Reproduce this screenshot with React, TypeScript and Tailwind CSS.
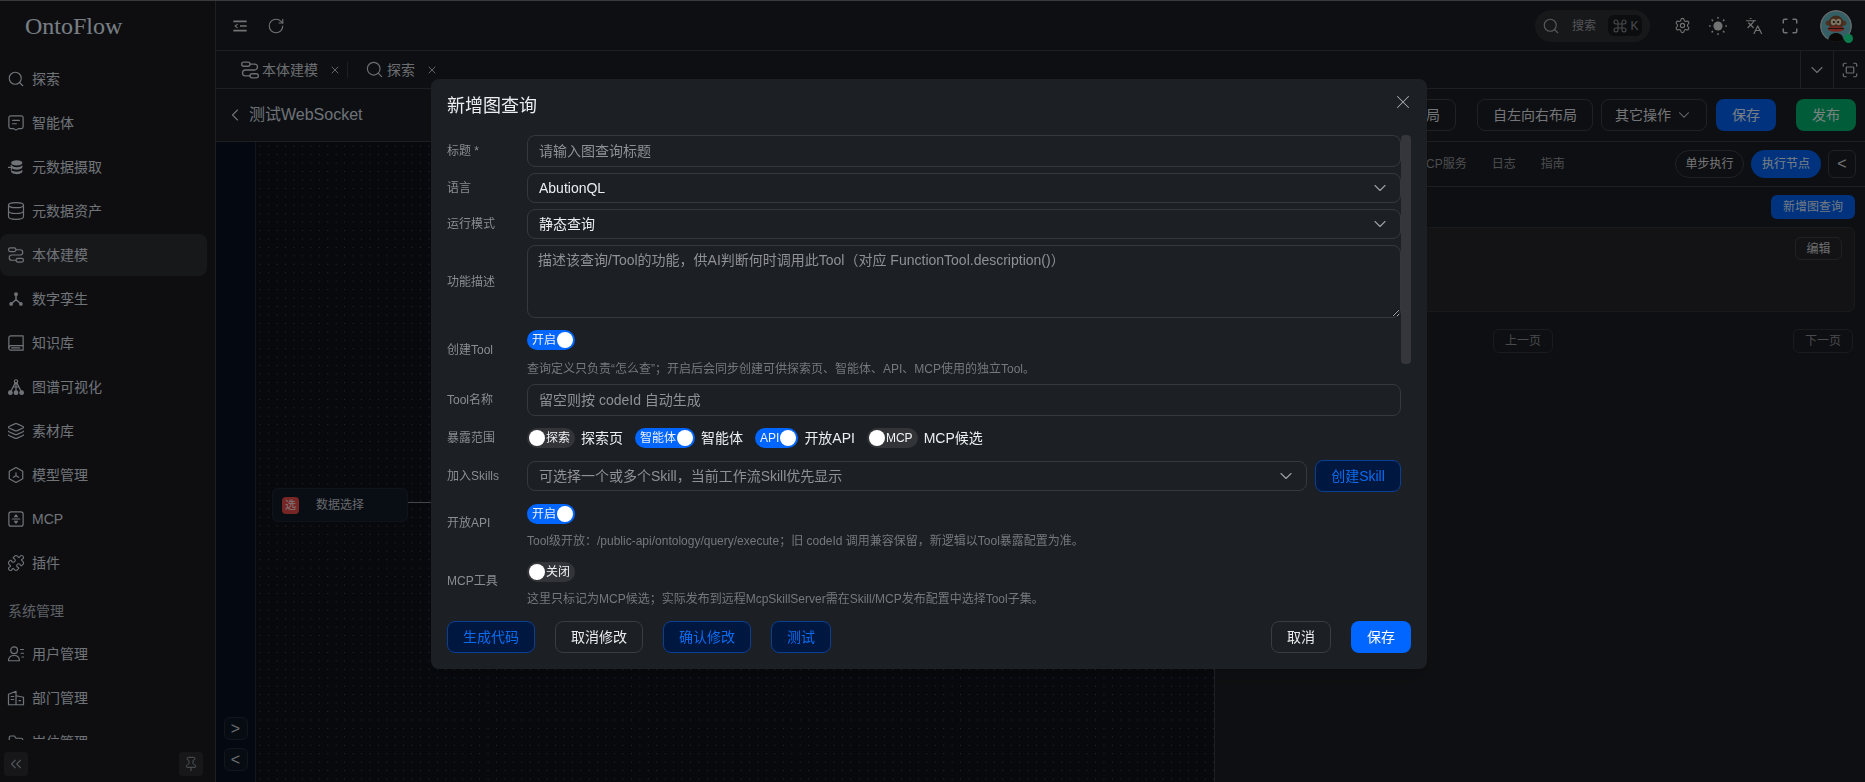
import type { ReactNode } from "react";
import { ChevronDown, ChevronLeft, ChevronsLeft, Database, Languages, Layers, Pin, Puzzle, RotateCw, Search, Settings, X } from "lucide-react";

type IconProps = { className?: string };

const Svg = ({ className = "h-4 w-4", children }: IconProps & { children: ReactNode }) => (
  <svg viewBox="0 0 24 24" fill="none" stroke="currentColor" strokeWidth="1.6" strokeLinecap="round" strokeLinejoin="round" className={className}>
    {children}
  </svg>
);

const AgentIcon = (p: IconProps) => (
  <Svg {...p}>
    <path d="M5 2.500h14a2.500 2.500 0 0 1 2.500 2.500v12a2.500 2.500 0 0 1-2.500 2.500h-4l-3 2-3-2H5A2.500 2.500 0 0 1 2.500 17V5A2.500 2.500 0 0 1 5 2.500z" />
    <path d="M7.500 8.500h9M7.500 13h5" />
  </Svg>
);
const IngestIcon = (p: IconProps) => (
  <Svg {...p}>
    <ellipse cx="13" cy="6.500" rx="7.500" ry="3.500" fill="currentColor" stroke="none" />
    <path d="M8 11.200c1.500.7 3.200 1 5 1 3.200 0 6-.9 7.500-2.600V12c0 1.900-3.400 3.500-7.500 3.500-2 0-3.700-.4-5-1z" fill="currentColor" stroke="none" />
    <path d="M5.500 16c1.700 1.500 4.400 2.200 7.500 2.200 3.200 0 6-.9 7.500-2.600V18c0 1.900-3.400 3.500-7.500 3.500S5.500 19.900 5.500 18z" fill="currentColor" stroke="none" />
    <path d="M2 12.500h6M5.500 10l2.500 2.500L5.500 15" />
  </Svg>
);
const OntologyIcon = (p: IconProps) => (
  <Svg {...p}>
    <rect x="2" y="2.500" width="10" height="5" rx="2.500" />
    <path d="M12 5h5.500a3.500 3.500 0 0 1 0 7h-11a3.500 3.500 0 0 0 0 7H12" />
    <rect x="12" y="16.500" width="10" height="5" rx="2.500" />
  </Svg>
);
const TwinIcon = (p: IconProps) => (
  <Svg {...p}>
    <circle cx="12" cy="5.500" r="2.500" fill="currentColor" stroke="none" />
    <circle cx="5.500" cy="18.500" r="2.500" fill="currentColor" stroke="none" />
    <circle cx="18.500" cy="18.500" r="2.500" fill="currentColor" stroke="none" />
    <path d="M12 7v6l-6 5M12 13l6 5" strokeWidth="2" />
  </Svg>
);
const BookIcon = (p: IconProps) => (
  <Svg {...p}>
    <path d="M2.500 19V5A2.500 2.500 0 0 1 5 2.500h16.500v19H5A2.500 2.500 0 0 1 2.500 19z" />
    <path d="M2.500 18A2.500 2.500 0 0 1 5 15.500h16.500M6 18.500h11" />
  </Svg>
);
const GraphIcon = (p: IconProps) => (
  <Svg {...p}>
    <circle cx="12" cy="4.500" r="2.200" />
    <circle cx="4.500" cy="19.500" r="2.400" fill="currentColor" />
    <circle cx="12" cy="19.500" r="2.400" fill="currentColor" />
    <circle cx="19.500" cy="19.500" r="2.400" fill="currentColor" />
    <path d="M11 6.500 5.500 17M12 6.500V17M13 6.500 18.500 17M8 12h8" />
  </Svg>
);
const ModelIcon = (p: IconProps) => (
  <Svg {...p}>
    <path d="M12 2l9 5v10l-9 5-9-5V7z" />
    <path d="M12 9v4l-3.500 2M12 13l3.500 2" />
  </Svg>
);
const McpIcon = (p: IconProps) => (
  <Svg {...p}>
    <rect x="2.500" y="2.500" width="19" height="19" rx="3" />
    <path d="M7 12h10M12 6.500l-2 2.500h4zM12 17.500l-2-2.500h4z" />
  </Svg>
);
const UserIcon = (p: IconProps) => (
  <Svg {...p}>
    <circle cx="9.500" cy="7" r="4.500" />
    <path d="M2 21c0-4.500 3-7 7.500-7s7 2.500 7 7z" />
    <path d="M18 6h4M19 11h3M20 16h2" />
  </Svg>
);
const DeptIcon = (p: IconProps) => (
  <Svg {...p}>
    <path d="M2 21V7l10-4v18zM12 9l10 2v10H2" />
    <path d="M5.500 10H9M5.500 14H9M16 15.500h2" />
  </Svg>
);
const PostIcon = (p: IconProps) => (
  <Svg {...p}>
    <path d="M3 20V6a2 2 0 0 1 2-2h5l2 3h7a2 2 0 0 1 2 2v11z" />
  </Svg>
);
const FoldIcon = (p: IconProps) => (
  <Svg {...p}>
    <path d="M2 5h20M2 19h20M12 12h10" strokeWidth="2.600" strokeLinecap="butt" />
    <path d="M8 9.500 4.500 12 8 14.500" />
  </Svg>
);
const SunDotsIcon = (p: IconProps) => (
  <Svg {...p}>
    <circle cx="12" cy="12" r="5.500" fill="currentColor" stroke="none" />
    <path d="M12 2v.5M12 21.500v.5M2 12h.5M21.500 12h.5M5 5l.4.4M18.600 18.600l.4.4M5 19l.4-.4M18.600 5.400 19 5" strokeWidth="2" />
  </Svg>
);
const CornersIcon = (p: IconProps) => (
  <Svg {...p}>
    <path d="M3 8V5a2 2 0 0 1 2-2h3M16 3h3a2 2 0 0 1 2 2v3M21 16v3a2 2 0 0 1-2 2h-3M8 21H5a2 2 0 0 1-2-2v-3" strokeWidth="2" />
  </Svg>
);
const ScanIcon = (p: IconProps) => (
  <Svg {...p}>
    <path d="M3 7V5a2 2 0 0 1 2-2h2M17 3h2a2 2 0 0 1 2 2v2M21 17v2a2 2 0 0 1-2 2h-2M7 21H5a2 2 0 0 1-2-2v-2" />
    <rect x="7" y="8" width="10" height="8" rx="1" />
  </Svg>
);
const CommandIcon = (p: IconProps) => (
  <Svg {...p}>
    <path d="M15 6v12a3 3 0 1 0 3-3H6a3 3 0 1 0 3 3V6a3 3 0 1 0-3 3h12a3 3 0 1 0-3-3" />
  </Svg>
);

const Avatar = () => (
  <div className="relative h-8 w-8">
    <svg viewBox="0 0 32 32" className="h-8 w-8 rounded-full">
      <circle cx="16" cy="16" r="16" fill="#b9bfc2" />
      <circle cx="16" cy="16" r="14.500" fill="#5fb0b8" />
      <path d="M8 31c1-6 4-8 8-8s7 2 8 8c-5 2-11 2-16 0z" fill="#151210" />
      <circle cx="8" cy="13" r="2.500" fill="#8a5e42" />
      <circle cx="24" cy="13" r="2.500" fill="#8a5e42" />
      <circle cx="16" cy="13" r="7.500" fill="#7a5038" />
      <ellipse cx="13.400" cy="12" rx="2.600" ry="3.200" fill="#e6d3b2" />
      <ellipse cx="18.600" cy="12" rx="2.600" ry="3.200" fill="#e6d3b2" />
      <circle cx="13.800" cy="12" r="1" fill="#14100e" />
      <circle cx="18.200" cy="12" r="1" fill="#14100e" />
      <ellipse cx="16" cy="19" rx="8.500" ry="2.700" fill="#d8473c" />
      <path d="M8 18.500h16" stroke="#1b1512" strokeWidth="0.800" />
    </svg>
    <span className="absolute -right-px -bottom-px h-[9px] w-[9px] rounded-full bg-[#14e08c]" />
  </div>
);

const navIcon = "h-[18px] w-[18px] shrink-0";

const menu: { label: string; icon: (p: IconProps) => ReactNode; active?: boolean }[] = [
  { label: "探索", icon: () => <Search className="h-[18px] w-[18px] shrink-0" strokeWidth={1.5} /> },
  { label: "智能体", icon: AgentIcon },
  { label: "元数据摄取", icon: IngestIcon },
  { label: "元数据资产", icon: () => <Database className="-m-px h-5 w-5 shrink-0" strokeWidth={1.4} /> },
  { label: "本体建模", icon: OntologyIcon, active: true },
  { label: "数字孪生", icon: TwinIcon },
  { label: "知识库", icon: BookIcon },
  { label: "图谱可视化", icon: GraphIcon },
  { label: "素材库", icon: () => <Layers className="h-[18px] w-[18px] shrink-0" strokeWidth={1.5} /> },
  { label: "模型管理", icon: ModelIcon },
  { label: "MCP", icon: McpIcon },
  { label: "插件", icon: () => <Puzzle className="h-[18px] w-[18px] shrink-0" strokeWidth={1.5} /> },
];

const adminMenu = [
  { label: "用户管理", icon: UserIcon },
  { label: "部门管理", icon: DeptIcon },
  { label: "岗位管理", icon: PostIcon },
];

const NavItem = ({ label, icon: Icon, active }: { label: string; icon: (p: IconProps) => ReactNode; active?: boolean }) => (
  <div className={`flex h-[42px] w-[207px] shrink-0 items-center gap-[7px] rounded-lg pl-[7px] text-sm ${active ? "bg-[#2b2c30]" : ""}`}>
    <Icon className={navIcon} />
    <span>{label}</span>
  </div>
);

const Sidebar = () => (
  <aside className="flex w-[216px] shrink-0 flex-col border-r border-[#363a41] bg-[#1a1b20] text-[#ccd3dc]">
    <div className="h-[57px] shrink-0 pt-[10px] pl-[25px] font-['Liberation_Serif',serif] text-2xl leading-[30px] text-[#dce6f0]">OntoFlow</div>
    <nav className="flex flex-1 flex-col gap-[2px] overflow-hidden">
      {menu.map((m) => (
        <NavItem key={m.label} {...m} />
      ))}
      <div className="flex h-[45px] shrink-0 items-center pt-[5px] pl-2 text-sm text-[#aab0b8]">系统管理</div>
      {adminMenu.map((m) => (
        <NavItem key={m.label} {...m} />
      ))}
    </nav>
    <div className="flex h-[42px] shrink-0 justify-between pt-[12px] pr-[12px] pl-[4px]">
      <button className="flex h-6 w-6 items-center justify-center rounded bg-[#2a2b30] text-[#9298a0]">
        <ChevronsLeft className="h-[18px] w-[18px]" strokeWidth={1.5} />
      </button>
      <button className="flex h-6 w-6 items-center justify-center rounded bg-[#2a2b30] text-[#9298a0]">
        <Pin className="h-4 w-4" strokeWidth={1.5} />
      </button>
    </div>
  </aside>
);

const HeaderIcon = ({ children }: { children: ReactNode }) => (
  <span className="flex w-[36px] shrink-0 items-center justify-center">{children}</span>
);

const Header = () => (
  <header className="flex h-[50px] shrink-0 items-center border-b border-[#363a41] pr-[13px] pl-[6px] text-[#cfcfcf]">
    <HeaderIcon>
      <FoldIcon className="h-4 w-4" />
    </HeaderIcon>
    <HeaderIcon>
      <RotateCw className="h-[18px] w-[18px]" strokeWidth={1.5} />
    </HeaderIcon>
    <div className="ml-auto flex h-8 w-[115px] items-center rounded-full bg-[#2a2c31] pl-[7px]">
      <Search className="h-[18px] w-[18px] text-[#a0a3a8]" strokeWidth={1.5} />
      <span className="ml-3 text-xs text-[#96999e]">搜索</span>
      <span className="ml-3 flex h-[21px] w-[34px] items-center justify-center gap-[3px] rounded-md bg-[#17181b] text-xs text-[#85888d]">
        <CommandIcon className="h-4 w-4" /> K
      </span>
    </div>
    <div className="ml-[14px] flex items-center">
      <HeaderIcon>
        <Settings className="h-[17px] w-[17px]" strokeWidth={1.6} />
      </HeaderIcon>
      <HeaderIcon>
        <SunDotsIcon className="h-5 w-5" />
      </HeaderIcon>
      <HeaderIcon>
        <Languages className="h-[18px] w-[18px]" strokeWidth={1.6} />
      </HeaderIcon>
      <HeaderIcon>
        <CornersIcon className="h-[18px] w-[18px]" />
      </HeaderIcon>
    </div>
    <div className="ml-3">
      <Avatar />
    </div>
  </header>
);

const Tabs = () => (
  <div className="flex h-[38px] shrink-0 items-center border-b border-[#363a41] text-sm text-[#c4c8ce]">
    <div className="flex items-center pl-[24px]">
      <OntologyIcon className="h-5 w-5" />
      <span className="ml-[2px]">本体建模</span>
      <X className="ml-[11px] h-3 w-3" strokeWidth={1.8} />
      <span className="ml-[6px] h-4 w-px bg-[#363a41]" />
    </div>
    <div className="flex items-center pl-[17px]">
      <Search className="h-[19px] w-[19px]" strokeWidth={1.5} />
      <span className="ml-[3px]">探索</span>
      <X className="ml-[11px] h-3 w-3" strokeWidth={1.8} />
    </div>
    <div className="ml-auto flex h-full">
      <div className="flex w-[33px] items-center justify-center border-l border-[#363a41]">
        <ChevronDown className="h-5 w-5" strokeWidth={1.3} />
      </div>
      <div className="flex w-[32px] items-center justify-center border-l border-[#363a41]">
        <ScanIcon className="h-[18px] w-[18px]" />
      </div>
    </div>
  </div>
);

const ghostBtn = "flex items-center justify-center rounded-lg border border-[#3a3d42] text-[#d4d6da]";

const Toolbar = () => (
  <div className="flex h-[53px] shrink-0 items-center border-b border-[#363a41] pr-[9px] pl-[9px]">
    <ChevronLeft className="h-5 w-5 text-[#c4c8ce]" strokeWidth={1.4} />
    <span className="ml-[4px] text-base text-[#c6d0dc]">测试WebSocket</span>
    <div className="ml-auto flex items-center text-sm">
      <button className={`${ghostBtn} h-8 w-[116px]`}>自上而下布局</button>
      <button className={`${ghostBtn} ml-[21px] h-8 w-[116px]`}>自左向右布局</button>
      <button className={`${ghostBtn} ml-2 h-8 w-[106px] gap-1`}>
        其它操作 <ChevronDown className="h-[18px] w-[18px]" strokeWidth={1.4} />
      </button>
      <button className="ml-[9px] h-8 w-[60px] rounded-lg bg-[#005ce6] text-[#dfe8f5]">保存</button>
      <button className="ml-5 h-8 w-[60px] rounded-lg bg-[#00a868] text-[#dfeee8]">发布</button>
    </div>
  </div>
);

const Canvas = () => (
  <div className="flex w-[999px] min-w-0 shrink-0 border-r border-[#363a41]">
    <div className="flex w-[40px] shrink-0 flex-col items-center justify-end gap-2 border-r border-[#20283a] bg-[#09111f] pb-[11px]">
      <button className="h-[23px] w-6 rounded-md border border-[#222a3a] bg-[#0e1624] text-base leading-none text-[#c4c8ce]">&gt;</button>
      <button className="h-[23px] w-6 rounded-md border border-[#222a3a] bg-[#0e1624] text-base leading-none text-[#c4c8ce]">&lt;</button>
    </div>
    <div className="relative flex-1 overflow-hidden bg-[#0d1119] bg-[radial-gradient(circle,#505762_0.6px,transparent_0.8px)] bg-[size:8.45px_8.45px]">
      <div className="absolute top-[346px] left-[16px] flex h-[34px] w-[136px] items-center rounded-md border border-[#1d2532] bg-[#121a26] pl-[9px] text-xs text-[#b9bdc3]">
        <span className="flex h-[17px] w-[17px] items-center justify-center rounded bg-[#d94646] text-[11px] text-[#e8d8d8]">选</span>
        <span className="ml-[17px]">数据选择</span>
      </div>
      <div className="absolute top-[360px] left-[152px] h-px w-[40px] bg-[#7c828a]" />
    </div>
  </div>
);

const RightPanel = () => (
  <div className="flex min-w-0 flex-1 flex-col text-xs">
    <div className="flex h-[45px] shrink-0 items-center border-b border-[#363a41] pr-[9px] pl-[201px] text-[#8b8d92]">
      <span>MCP服务</span>
      <span className="ml-[25px]">日志</span>
      <span className="ml-[25px]">指南</span>
      <button className="ml-auto h-7 w-[69px] rounded-full border border-[#3a3d42] text-[#d4d6da]">单步执行</button>
      <button className="ml-[7px] h-7 w-[70px] rounded-full bg-[#005ce6] text-[#dfe8f5]">执行节点</button>
      <button className="ml-[7px] h-7 w-7 rounded-md border border-[#3a3d42] text-base leading-none text-[#d4d6da]">&lt;</button>
    </div>
    <div className="mt-2 flex justify-end pr-[10px]">
      <button className="h-6 w-[84px] rounded-md bg-[#005ce6] text-[#cfdcf0]">新增图查询</button>
    </div>
    <div className="mt-2 mr-[10px] ml-[10px] flex h-[85px] justify-end rounded-md border border-[#2e3033] bg-[#232427] pt-[9px] pr-[12px]">
      <button className="h-[23px] w-[47px] rounded-md border border-[#3a3d42] text-[#c4c6ca]">编辑</button>
    </div>
    <div className="mt-[17px] flex justify-between pr-[12px] pl-[278px] text-[#85878b]">
      <button className="h-6 w-[60px] rounded-md border border-[#303236]">上一页</button>
      <button className="h-6 w-[60px] rounded-md border border-[#303236]">下一页</button>
    </div>
  </div>
);

const Field = ({ label, children, note }: { label: ReactNode; children: ReactNode; note?: boolean }) => (
  <div className="flex items-center">
    <div className={`w-[80px] shrink-0 text-xs text-[#8a8d92] ${note ? "pb-2" : ""}`}>{label}</div>
    <div className="min-w-0 flex-1">{children}</div>
  </div>
);

const field = "w-full rounded-lg border border-[#36383d] bg-transparent text-sm outline-none";

const TextInput = ({ placeholder }: { placeholder: string }) => (
  <input readOnly placeholder={placeholder} className={`${field} h-8 pr-3 pl-[11px] placeholder:text-[#8f9196]`} />
);

const SelectBox = ({ value, muted }: { value: string; muted?: boolean }) => (
  <div className={`${field} flex h-[30px] items-center justify-between pr-[10px] pl-[11px] ${muted ? "text-[#8f9196]" : "text-[#eceef0]"}`}>
    <span>{value}</span>
    <ChevronDown className="h-5 w-5 text-[#9a9ca0]" strokeWidth={1.4} />
  </div>
);

const Toggle = ({ on, text }: { on?: boolean; text: string }) => (
  <span className={`flex h-5 w-fit min-w-[43px] items-center rounded-full text-xs text-[#f0f2f5] ${on ? "gap-px bg-[#0066ff] pr-[2px] pl-[5px]" : "gap-px bg-[#333438] pr-[5px] pl-[2px]"}`}>
    {!on && <span className="h-4 w-4 rounded-full bg-white" />}
    <span>{text}</span>
    {on && <span className="h-4 w-4 rounded-full bg-white" />}
  </span>
);

const Scope = ({ on, text, label }: { on?: boolean; text: string; label: string }) => (
  <div className="flex items-center gap-[6px] text-sm text-[#eceef0]">
    <Toggle on={on} text={text} />
    <span>{label}</span>
  </div>
);

const outlineBlue = "h-8 shrink-0 rounded-lg border border-[#0b3f94] bg-[#00173f] text-sm text-[#0b6cf0]";
const outlinePlain = "h-8 shrink-0 rounded-lg border border-[#3a3c40] text-sm text-[#e8e9eb]";

const QueryDialog = () => (
  <div className="fixed top-[79px] left-[431px] flex h-[590px] w-[996px] flex-col rounded-lg bg-[#1c1f24] text-[#eceef0] shadow-lg">
    <div className="flex h-[56px] shrink-0 items-center justify-between pr-[13px] pb-[2px] pl-4">
      <h2 className="text-lg">新增图查询</h2>
      <X className="mb-[8px] h-[22px] w-[22px] text-[#a8aaae]" strokeWidth={1.1} />
    </div>
    <div className="flex h-[472px] shrink-0 overflow-hidden px-4">
      <div className="flex min-w-0 flex-1 flex-col">
        <Field label={<>标题 <span className="text-[#8a8d92]">*</span></>}>
          <TextInput placeholder="请输入图查询标题" />
        </Field>
        <div className="mt-[6px]">
          <Field label="语言">
            <SelectBox value="AbutionQL" />
          </Field>
        </div>
        <div className="mt-[6px]">
          <Field label="运行模式">
            <SelectBox value="静态查询" />
          </Field>
        </div>
        <div className="mt-[6px]">
          <Field label="功能描述">
            <textarea
              readOnly
              placeholder="描述该查询/Tool的功能，供AI判断何时调用此Tool（对应 FunctionTool.description()）"
              className={`${field} block h-[73px] px-[10px] py-[4px] placeholder:text-[#8f9196]`}
            />
          </Field>
        </div>
        <div className="mt-3">
          <Field label="创建Tool" note>
            <Toggle on text="开启" />
            <p className="mt-[11px] h-[17px] text-xs leading-[17px] text-[#75787e]">查询定义只负责“怎么查”；开启后会同步创建可供探索页、智能体、API、MCP使用的独立Tool。</p>
          </Field>
        </div>
        <div className="mt-[6px]">
          <Field label="Tool名称">
            <TextInput placeholder="留空则按 codeId 自动生成" />
          </Field>
        </div>
        <div className="mt-3">
          <Field label="暴露范围">
            <div className="flex items-center gap-3">
              <Scope text="探索" label="探索页" />
              <Scope on text="智能体" label="智能体" />
              <Scope on text="API" label="开放API" />
              <Scope text="MCP" label="MCP候选" />
            </div>
          </Field>
        </div>
        <div className="mt-3">
          <Field label="加入Skills">
            <div className="flex items-center gap-2">
              <SelectBox muted value="可选择一个或多个Skill，当前工作流Skill优先显示" />
              <button className={`${outlineBlue} w-[86px]`}>创建Skill</button>
            </div>
          </Field>
        </div>
        <div className="mt-3">
          <Field label="开放API" note>
            <Toggle on text="开启" />
            <p className="mt-[9px] h-[17px] text-xs leading-[17px] text-[#75787e]">Tool级开放：/public-api/ontology/query/execute；旧 codeId 调用兼容保留，新逻辑以Tool暴露配置为准。</p>
          </Field>
        </div>
        <div className="mt-3">
          <Field label="MCP工具" note>
            <Toggle text="关闭" />
            <p className="mt-[9px] h-[17px] text-xs leading-[17px] text-[#75787e]">这里只标记为MCP候选；实际发布到远程McpSkillServer需在Skill/MCP发布配置中选择Tool子集。</p>
          </Field>
        </div>
      </div>
      <div className="h-[229px] w-[10px] shrink-0 rounded bg-[#35363b]" />
    </div>
    <div className="flex flex-1 items-start px-4 pt-[14px]">
      <button className={`${outlineBlue} w-[88px]`}>生成代码</button>
      <button className={`${outlinePlain} ml-5 w-[88px]`}>取消修改</button>
      <button className={`${outlineBlue} ml-5 w-[88px]`}>确认修改</button>
      <button className={`${outlineBlue} ml-5 w-[60px]`}>测试</button>
      <button className={`${outlinePlain} ml-auto w-[60px]`}>取消</button>
      <button className="ml-5 h-8 w-[60px] rounded-lg bg-[#0066ff] text-sm text-white">保存</button>
    </div>
  </div>
);

export default function App() {
  return (
    <div className="flex h-screen overflow-hidden border-t border-[#6a6a6a] bg-[#1a1c21] font-['Liberation_Sans','Noto_Sans_CJK_SC',sans-serif]">
      <Sidebar />
      <main className="flex min-w-0 flex-1 flex-col">
        <Header />
        <Tabs />
        <Toolbar />
        <div className="flex min-h-0 flex-1">
          <Canvas />
          <RightPanel />
        </div>
      </main>
      <div className="fixed inset-0 bg-black/45" />
      <QueryDialog />
    </div>
  );
}
